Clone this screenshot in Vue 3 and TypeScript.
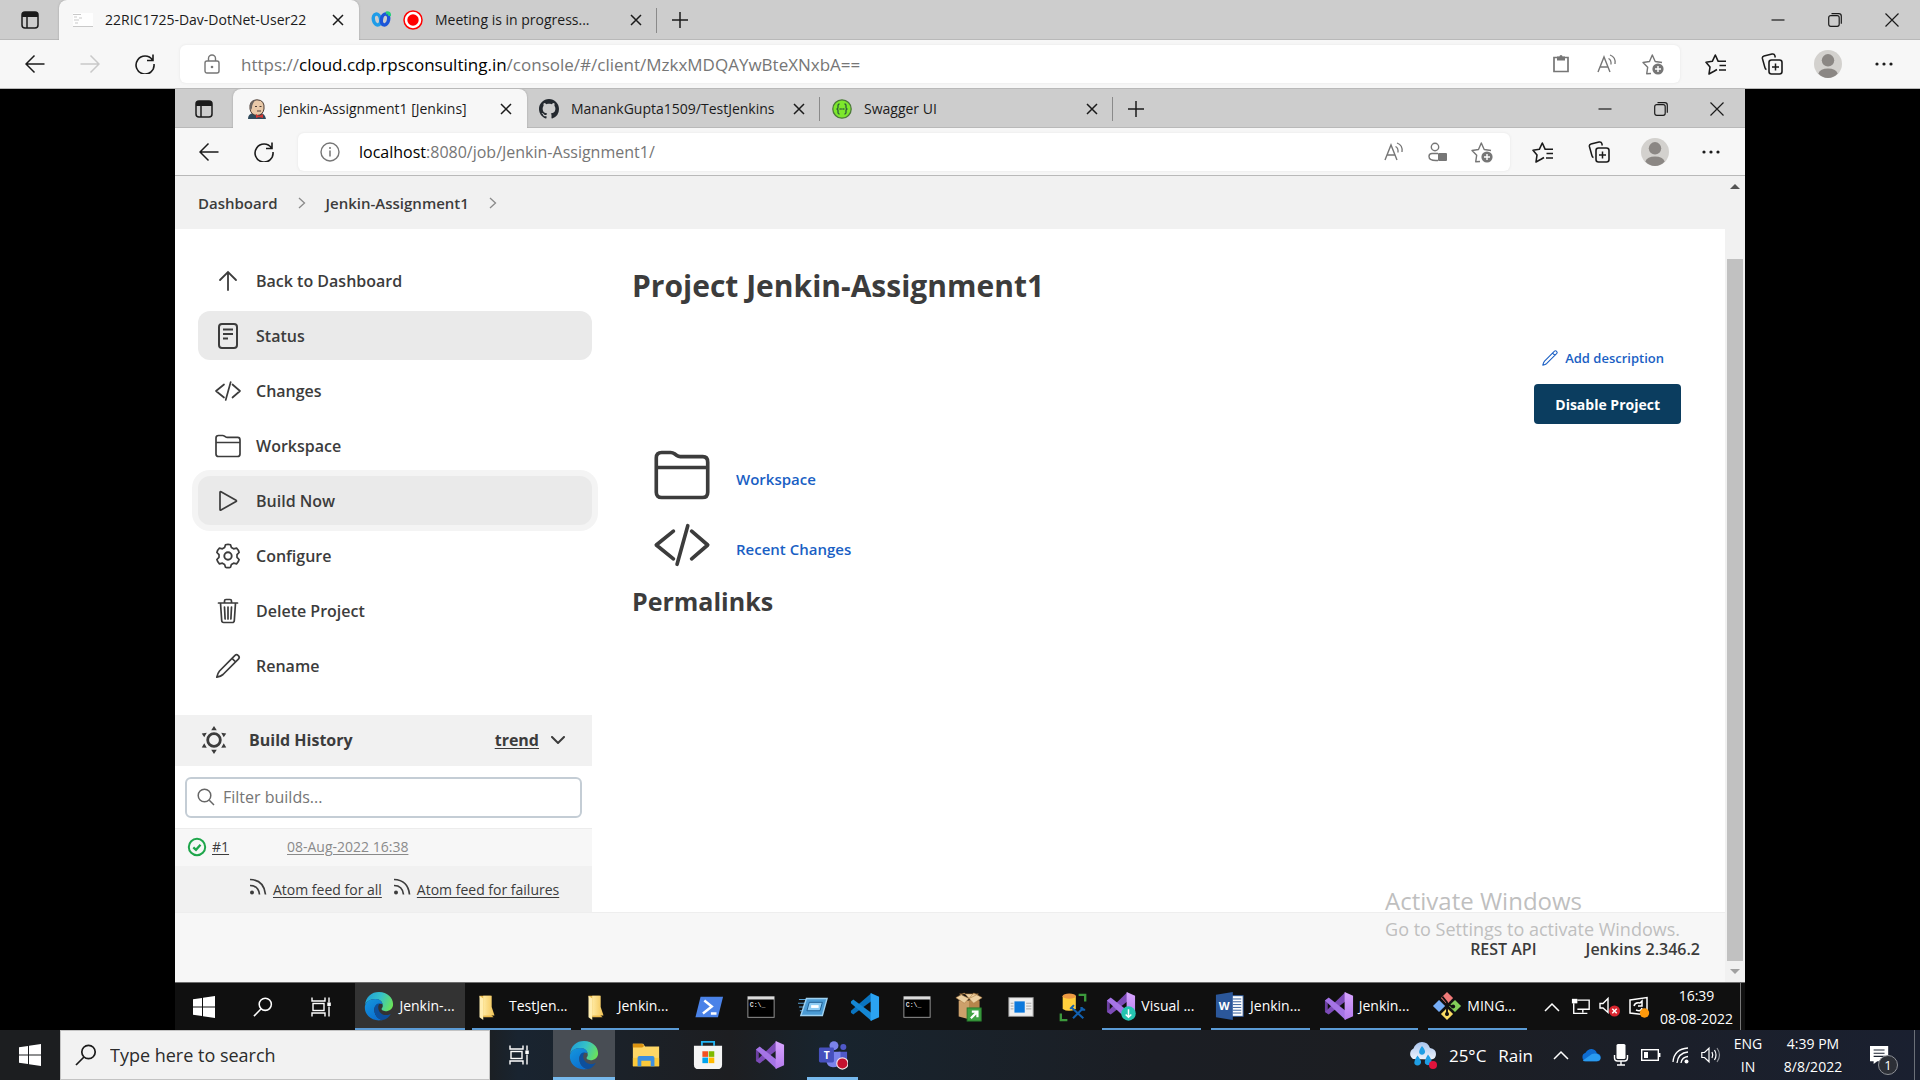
<script setup lang="ts">
import { ref } from 'vue'

interface Task {
  icon: string
  label: string
  active?: boolean
  focused?: boolean
}

interface Tab {
  title: string
  icon: string
  active?: boolean
  recording?: boolean
}

interface Glyph {
  text: string
  x: number
  y: number
  size: number
}

interface AppButton {
  icon: string
  label: string
  kind?: string
  glyph?: Glyph
}

const outerTabs: Tab[] = [
  { title: '22RIC1725-Dav-DotNet-User22', icon: 'i-console', active: true },
  { title: 'Meeting is in progress...', icon: 'i-webex', recording: true },
]

const innerTabs: Tab[] = [
  { title: 'Jenkin-Assignment1 [Jenkins]', icon: 'i-jenkins', active: true },
  { title: 'ManankGupta1509/TestJenkins', icon: 'i-github' },
  { title: 'Swagger UI', icon: 'i-swagger' },
]

const tasks: Task[] = [
  { icon: 'i-up', label: 'Back to Dashboard' },
  { icon: 'i-status', label: 'Status', active: true },
  { icon: 'i-code', label: 'Changes' },
  { icon: 'i-folder', label: 'Workspace' },
  { icon: 'i-play', label: 'Build Now', active: true, focused: true },
  { icon: 'i-gear', label: 'Configure' },
  { icon: 'i-trash', label: 'Delete Project' },
  { icon: 'i-pencil', label: 'Rename' },
]

const prompt: Glyph = { text: 'C:\\_', x: 4, y: 16, size: 7 }

const openLeft: AppButton[] = [
  { icon: 'i-edge', label: 'Jenkin-...', kind: 'current' },
  { icon: 'i-dir', label: 'TestJen...', kind: 'dir' },
  { icon: 'i-dir', label: 'Jenkin...', kind: 'dir' },
]
const pinned: AppButton[] = [
  { icon: 'i-ps', label: 'PowerShell' },
  { icon: 'i-cmd', label: 'Command Prompt', glyph: prompt },
  { icon: 'i-run', label: 'Run' },
  { icon: 'i-vscode', label: 'Visual Studio Code' },
  { icon: 'i-cmd', label: 'Developer Prompt', glyph: prompt },
  { icon: 'i-box', label: 'Packages' },
  { icon: 'i-panel', label: 'Server Manager' },
  { icon: 'i-sql', label: 'SQL Server Management' },
]
const openRight: AppButton[] = [
  { icon: 'i-vsinst', label: 'Visual ...' },
  { icon: 'i-word', label: 'Jenkin...', glyph: { text: 'W', x: 4, y: 20, size: 12 } },
  { icon: 'i-vs', label: 'Jenkin...' },
  { icon: 'i-git', label: 'MING...' },
]
const hostApps: AppButton[] = [
  { icon: 'i-edge', label: 'Microsoft Edge', kind: 'current' },
  { icon: 'i-explorer', label: 'File Explorer' },
  { icon: 'i-store', label: 'Microsoft Store' },
  { icon: 'i-vs', label: 'Visual Studio' },
  { icon: 'i-teams', label: 'Microsoft Teams', kind: 'running', glyph: { text: 'T', x: 6, y: 20, size: 11 } },
]

const filter = ref('')
const query = ref('')
</script>

<template>
  <div class="screen">
    <svg class="sprite" aria-hidden="true">
      <defs>
        <linearGradient id="edgeTop" x1="0" y1="0.3" x2="1" y2="0.6">
          <stop offset="0" stop-color="#1f9fd8" /><stop offset="0.5" stop-color="#35c1c8" /><stop offset="1" stop-color="#6be25a" />
        </linearGradient>
        <linearGradient id="edgeMid" x1="0" y1="0" x2="0.6" y2="1">
          <stop offset="0" stop-color="#1597dd" /><stop offset="1" stop-color="#0b6fd0" />
        </linearGradient>
        <linearGradient id="vsRight" x1="0" y1="0" x2="0" y2="1">
          <stop offset="0" stop-color="#d9a6ff" /><stop offset="1" stop-color="#b57bee" />
        </linearGradient>
        <linearGradient id="dirFill" x1="0" y1="0" x2="1" y2="0">
          <stop offset="0" stop-color="#ffe9a0" /><stop offset="1" stop-color="#f2c456" />
        </linearGradient>
        <linearGradient id="cloudFill" x1="0" y1="0" x2="0" y2="1">
          <stop offset="0" stop-color="#a9c5ee" /><stop offset="1" stop-color="#eef3fb" />
        </linearGradient>
      </defs>

      <symbol id="i-spaces" viewBox="0 0 18 18">
        <rect x="1" y="1" width="16" height="16" rx="3" fill="none" stroke="currentColor" stroke-width="1.5" />
        <path d="M1 6V4q0-3 3-3h10q3 0 3 3v2z" fill="currentColor" />
        <path d="M6 6v11" stroke="currentColor" stroke-width="1.5" />
      </symbol>
      <symbol id="i-close" viewBox="0 0 12 12">
        <path d="M1 1l10 10M11 1L1 11" stroke="currentColor" stroke-width="1.5" />
      </symbol>
      <symbol id="i-plus" viewBox="0 0 18 18">
        <path d="M9 1v16M1 9h16" stroke="currentColor" stroke-width="1.5" />
      </symbol>
      <symbol id="i-min" viewBox="0 0 14 14"><path d="M0.5 7h13" stroke="currentColor" stroke-width="1.2" /></symbol>
      <symbol id="i-restore" viewBox="0 0 14 14">
        <rect x="0.7" y="2.700" width="10.500" height="10.600" rx="2" fill="none" stroke="currentColor" stroke-width="1.2" />
        <path d="M3.500.7h7.300q2.500 0 2.500 2.500v7.600" fill="none" stroke="currentColor" stroke-width="1.200" />
      </symbol>
      <symbol id="i-x" viewBox="0 0 14 14"><path d="M.5.5l13 13M13.500.5l-13 13" stroke="currentColor" stroke-width="1.200" /></symbol>
      <symbol id="i-back" viewBox="0 0 20 20">
        <path d="M19.500 10H1M9.500 1.500L1 10l8.500 8.500" fill="none" stroke="currentColor" stroke-width="1.500" />
      </symbol>
      <symbol id="i-fwd" viewBox="0 0 20 20">
        <path d="M.5 10H19M10.500 1.500L19 10l-8.500 8.500" fill="none" stroke="currentColor" stroke-width="1.500" />
      </symbol>
      <symbol id="i-reload" viewBox="0 0 20 20">
        <path d="M17.500 6A9 9 0 1 0 19 10M18 .5v6h-6" fill="none" stroke="currentColor" stroke-width="1.600" />
      </symbol>
      <symbol id="i-lock" viewBox="0 0 16 20">
        <rect x="1" y="7" width="14" height="12" rx="2" fill="none" stroke="currentColor" stroke-width="1.400" />
        <path d="M4.500 7V4.500a3.500 3.500 0 0 1 7 0V7" fill="none" stroke="currentColor" stroke-width="1.400" />
        <circle cx="8" cy="13" r="1.300" fill="currentColor" />
      </symbol>
      <symbol id="i-info" viewBox="0 0 20 20">
        <circle cx="10" cy="10" r="9" fill="none" stroke="currentColor" stroke-width="1.400" />
        <path d="M10 8.500v6" stroke="currentColor" stroke-width="1.500" /><circle cx="10" cy="6" r="1" fill="currentColor" />
      </symbol>
      <symbol id="i-clip" viewBox="0 0 20 20">
        <path d="M3 3.500h14v14H3z" fill="none" stroke="currentColor" stroke-width="1.700" />
        <path d="M6 2.500h2.500a1.500 1.500 0 0 1 3 0H14v4H6z" fill="currentColor" />
      </symbol>
      <symbol id="i-aloud" viewBox="0 0 20 20">
        <path d="M1 18L7 3l6 15M3 13h8" fill="none" stroke="currentColor" stroke-width="1.400" />
        <path d="M11.500 4.500q3 1.500 2.500 6M13 1q6 2 5 9" fill="none" stroke="currentColor" stroke-width="1.300" />
      </symbol>
      <symbol id="i-id" viewBox="0 0 20 20">
        <circle cx="7" cy="5" r="3.700" fill="none" stroke="currentColor" stroke-width="1.400" />
        <path d="M10 11.500H4q-3 0-3 3 0 4 7 4h2" fill="none" stroke="currentColor" stroke-width="1.400" />
        <rect x="10" y="11" width="9" height="8" rx="1" fill="currentColor" />
      </symbol>
      <symbol id="i-staradd" viewBox="0 0 22 22">
        <path d="M9 20.500l-4.300 .3 1-6.600L1 9.500l6.500-1L10.300 2l2.900 6.500 6.800 1" fill="none" stroke="currentColor" stroke-width="1.400" stroke-linejoin="round" />
        <circle cx="16" cy="16" r="5.600" fill="currentColor" />
        <path d="M16 13v6M13 16h6" stroke="#fff" stroke-width="1.400" />
      </symbol>
      <symbol id="i-favs" viewBox="0 0 22 22">
        <path d="M12 16.500l-3 1.800-5 2.700 1-7L1 9.300l6.300-1L10.300 2l2.900 6.300H21M14.500 12.500H21M14 17h7" fill="none" stroke="currentColor" stroke-width="1.600" stroke-linejoin="round" />
      </symbol>
      <symbol id="i-coll" viewBox="0 0 22 22">
        <path d="M5.500 16.500q-1.200-.2-1.600-2L1.400 5.500Q1 3.500 3 3l8-2q2.300-.5 2.800 1.500l.5 2" fill="none" stroke="currentColor" stroke-width="1.500" />
        <rect x="8" y="7" width="13" height="14" rx="2.500" fill="none" stroke="currentColor" stroke-width="1.600" />
        <path d="M14.500 10.500v7M11 14h7" stroke="currentColor" stroke-width="1.500" />
      </symbol>
      <symbol id="i-user" viewBox="0 0 28 28">
        <circle cx="14" cy="14" r="14" fill="#d3d1ce" />
        <circle cx="14" cy="10.300" r="6.200" fill="#8b8784" />
        <path d="M4.300 23.500q2-5 9.700-5t9.700 5A14 14 0 0 1 14 28a14 14 0 0 1-9.700-4.500z" fill="#8b8784" />
      </symbol>
      <symbol id="i-dots" viewBox="0 0 18 4">
        <circle cx="2" cy="2" r="1.600" fill="currentColor" /><circle cx="9" cy="2" r="1.600" fill="currentColor" /><circle cx="16" cy="2" r="1.600" fill="currentColor" />
      </symbol>

      <symbol id="i-console" viewBox="0 0 20 20">
        <rect x="0" y="3" width="20" height="14" fill="#fefefe" /><path d="M0 16.500h20M0 4.500h8M1 7h3M6 8h3M1 10h5M2 13h3" stroke="#c9c9c9" />
      </symbol>
      <symbol id="i-webex" viewBox="0 0 20 20">
        <ellipse cx="6" cy="9.500" rx="3.600" ry="5.500" fill="none" stroke="#1f9ce8" stroke-width="3.500" transform="rotate(-12 6 9.500)" />
        <ellipse cx="14" cy="9.500" rx="3.600" ry="5.500" fill="none" stroke="#1c56d8" stroke-width="3.500" transform="rotate(12 14 9.500)" />
        <path d="M15 3q4-1 3.500 3" fill="none" stroke="#28d07c" stroke-width="3" />
      </symbol>
      <symbol id="i-rec" viewBox="0 0 20 20">
        <circle cx="10" cy="10" r="9" fill="#fff" stroke="#f00" stroke-width="1.500" /><circle cx="10" cy="10" r="5.700" fill="#f00" />
      </symbol>
      <symbol id="i-jenkins" viewBox="0 0 20 20">
        <path d="M1 20q0-5 5-6h8q4 1 5 6z" fill="#2f4a5c" />
        <path d="M3 10Q2 1 10 .8 18 1 17 10q-1 6-7 6.500Q4 16 3 10z" fill="#e9c9a8" stroke="#4a3b34" />
        <path d="M3 9Q2 1.500 9 .8 5 4 5 9l-1 2z" fill="#6a6460" />
        <path d="M8 7.500h2M12.500 7.500h2M10 12h4" stroke="#4a3b34" />
        <path d="M9 15l3 2 4-2v4l-4-1-3 1z" fill="#d33833" />
      </symbol>
      <symbol id="i-github" viewBox="0 0 16 16">
        <path fill="#24292f" d="M8 0C3.580 0 0 3.580 0 8c0 3.540 2.290 6.530 5.470 7.590.4.07.55-.17.55-.38 0-.19-.01-.82-.01-1.490-2.010.37-2.530-.49-2.690-.94-.09-.23-.48-.94-.82-1.130-.28-.15-.68-.52-.01-.53.63-.01 1.080.58 1.230.82.72 1.210 1.870.87 2.330.66.07-.52.28-.87.51-1.070-1.780-.2-3.640-.89-3.640-3.950 0-.87.31-1.590.82-2.150-.08-.2-.36-1.020.08-2.120 0 0 .67-.21 2.200.82.64-.18 1.320-.27 2-.27.68 0 1.360.09 2 .27 1.530-1.040 2.200-.82 2.200-.82.44 1.100.16 1.920.08 2.120.51.56.82 1.270.82 2.150 0 3.070-1.870 3.750-3.650 3.950.29.25.54.73.54 1.480 0 1.070-.01 1.930-.01 2.200 0 .21.15.46.55.38A8.010 8.010 0 0 0 16 8c0-4.420-3.580-8-8-8z" />
      </symbol>
      <symbol id="i-swagger" viewBox="0 0 20 20">
        <circle cx="10" cy="10" r="9.200" fill="#7de82c" stroke="#4c7a3a" stroke-width="1.300" />
        <path d="M7.500 5Q6 5 6 6.500V8.500Q6 10 4.500 10 6 10 6 11.500v2Q6 15 7.500 15M12.500 5Q14 5 14 6.500V8.500q0 1.500 1.500 1.500-1.500 0-1.500 1.500v2q0 1.500-1.500 1.500" fill="none" stroke="#2d5c3a" stroke-width="1.300" />
        <path d="M7.500 10h5" stroke="#2d5c3a" stroke-width="1.600" stroke-dasharray="1.300 .5" />
      </symbol>

      <symbol id="i-chev" viewBox="0 0 8 12"><path d="M1 1l5.500 5L1 11" fill="none" stroke="currentColor" stroke-width="1.300" /></symbol>
      <symbol id="i-up" viewBox="0 0 28 28">
        <path d="M14 23V5.500M6 13l8-8 8 8" fill="none" stroke="currentColor" stroke-width="1.800" stroke-linecap="round" />
      </symbol>
      <symbol id="i-status" viewBox="0 0 28 28">
        <rect x="5" y="2" width="18" height="24" rx="3" fill="none" stroke="currentColor" stroke-width="2" />
        <path d="M9 7.500h10M9 12h10M9 16.500h5" stroke="currentColor" stroke-width="1.900" />
      </symbol>
      <symbol id="i-code" viewBox="0 0 28 28">
        <path d="M10 7.500L2 14l8 6.500M18.500 7.500L26 14l-7.500 6.500M16.700 5l-5 18" fill="none" stroke="currentColor" stroke-width="1.700" stroke-linecap="round" stroke-linejoin="round" />
      </symbol>
      <symbol id="i-folder" viewBox="0 0 28 28">
        <path d="M2 22V6q0-2.500 2.500-2.500h4.200q1 0 1.800.6l1.100.8q.7.500 1.600.5h10.500Q26 5.400 26 8v14q0 2.500-2.500 2.500h-19Q2 24.500 2 22zM2 10.500h24" fill="none" stroke="currentColor" stroke-width="1.700" />
      </symbol>
      <symbol id="i-play" viewBox="0 0 28 28">
        <path d="M6 5.300q0-1 1-.5l15 8.400q1 .7 0 1.400L7 23q-1 .5-1-.5z" fill="none" stroke="currentColor" stroke-width="1.700" />
      </symbol>
      <symbol id="i-gear" viewBox="0 0 28 28">
        <path d="M11.500 2.800q2.500-1 5 0l.9 2.800 2.200 1.200 3-.6q1.900 1.800 2.500 4.300L23 12.700v2.600l2.100 2.200q-.6 2.500-2.500 4.300l-3-.6-2.200 1.200-.9 2.800q-2.500 1-5 0l-.9-2.800-2.200-1.200-3 .6q-1.900-1.800-2.500-4.300L5 15.300v-2.600l-2.100-2.200q.6-2.500 2.500-4.300l3 .6 2.200-1.200z" fill="none" stroke="currentColor" stroke-width="1.700" stroke-linejoin="round" />
        <circle cx="14" cy="14" r="3.700" fill="none" stroke="currentColor" stroke-width="1.900" />
      </symbol>
      <symbol id="i-trash" viewBox="0 0 28 28">
        <path d="M4.500 6h19M6.500 6l1.200 17.500q.1 2 2 2h8.600q1.900 0 2-2L21.500 6M10.500 6V4q0-1.500 1.500-1.500h4q1.500 0 1.500 1.500v2M10.500 10l.6 12M14 10v12M17.500 10l-.6 12" fill="none" stroke="currentColor" stroke-width="1.700" stroke-linecap="round" />
      </symbol>
      <symbol id="i-pencil" viewBox="0 0 28 28">
        <path d="M21 3.300q1.600-1.300 3.300.3t.3 3.300L9 22.500q-2 1.700-6.200 2.700 1-4.200 2.700-6.200zM18 6.300L21.700 10" fill="none" stroke="currentColor" stroke-width="1.700" stroke-linejoin="round" />
      </symbol>
      <symbol id="i-sun" viewBox="0 0 28 30">
        <circle cx="14" cy="15" r="6.800" fill="none" stroke="currentColor" stroke-width="3" />
        <path d="M14 0l3 4.500h-6zM14 30l3-4.500h-6zM.8 8l5.400-.8-2.700 4.800zM27.200 8l-5.400-.8 2.700 4.800zM.8 23l5.400 .4-2.700-5zM27.200 23l-5.400 .4 2.700-5z" fill="currentColor" />
      </symbol>
      <symbol id="i-down" viewBox="0 0 14 8"><path d="M1 1l6 6 6-6" fill="none" stroke="currentColor" stroke-width="2" stroke-linecap="round" /></symbol>
      <symbol id="i-find" viewBox="0 0 18 18">
        <circle cx="7.500" cy="7.500" r="6.300" fill="none" stroke="currentColor" stroke-width="1.500" /><path d="M12.300 12.300L17 17" stroke="currentColor" stroke-width="1.500" />
      </symbol>
      <symbol id="i-ok" viewBox="0 0 20 20">
        <circle cx="10" cy="10" r="8.200" fill="none" stroke="#1ea64b" stroke-width="2" /><path d="M6.300 10.300l2.700 2.500 4.500-5" fill="none" stroke="#1ea64b" stroke-width="2.300" />
      </symbol>
      <symbol id="i-rss" viewBox="0 0 18 18">
        <circle cx="3" cy="14.500" r="2" fill="currentColor" /><path d="M1 7.500q8.500 0 9.500 9M1 1.500q14 .5 15.500 15" fill="none" stroke="currentColor" stroke-width="1.700" />
      </symbol>

      <symbol id="i-win" viewBox="0 0 22 22">
        <path d="M0 3.200L9 2v8.500H0zM10 1.800L22 0v10.500H10zM0 11.500h9V20L0 18.800zM10 11.500h12V22l-12-1.800z" fill="#fff" />
      </symbol>
      <symbol id="i-loupe" viewBox="0 0 22 22">
        <circle cx="13.500" cy="8" r="6.700" fill="none" stroke="currentColor" stroke-width="1.700" /><path d="M9 13L1 21" stroke="currentColor" stroke-width="1.700" />
      </symbol>
      <symbol id="i-views" viewBox="0 0 22 20">
        <path d="M1 .5v3.500h13V.5M1 19.500V16h13v3.500M18 .5v5M18 9.500v10" fill="none" stroke="#fff" stroke-width="1.400" />
        <rect x="2" y="6.500" width="11" height="7" fill="none" stroke="#fff" stroke-width="1.400" /><rect x="16.300" y="5.500" width="3.500" height="3.500" fill="#fff" />
      </symbol>
      <symbol id="i-edge" viewBox="0 0 32 32">
        <path d="M1 15C2 6 8 1 16 1c9 0 15 6 15 13 0 5-4 7.500-8 7.500-3 0-5-1.500-4-3 1-1 1-2 1-3 0-4-3-7-8-7C6 8.500 2 12 1 15z" fill="url(#edgeTop)" />
        <path d="M1 16c1-4.500 5-7.500 11-7.500 4 0 7 2 8 5.500-6-2-9 2-9 6 0 6 4 10 9 11-1 .2-3 .4-4 .4C7 31 0 25 1 16z" fill="url(#edgeMid)" />
        <path d="M11 20c0-4 2-7 6-7-4 4-1 11.500 5 12.500 3 .5 5-.5 6.500-1-2 4-6 6.500-9 6.500C14 30 11 25 11 20z" fill="#0d4f9c" />
      </symbol>
      <symbol id="i-dir" viewBox="0 0 32 32">
        <path d="M8 5h12v20l3 3H12z" fill="#e9b94c" /><path d="M8 5l4 3v23l-4-3z" fill="#ffedb0" /><path d="M12 5h9v12l3 9H12z" fill="url(#dirFill)" />
      </symbol>
      <symbol id="i-ps" viewBox="0 0 32 32">
        <path d="M7 5h24l-5.500 22H1.500z" fill="#4a82e8" /><path d="M11 9l8 6.500-9.500 7.500M18 23h6" fill="none" stroke="#fff" stroke-width="2.600" />
      </symbol>
      <symbol id="i-cmd" viewBox="0 0 32 32">
        <rect x="2" y="5" width="28" height="22" fill="#000" stroke="#9a9a9a" /><path d="M2 6.500h28" stroke="#dcdcdc" stroke-width="3" />
      </symbol>
      <symbol id="i-run" viewBox="0 0 32 32">
        <path d="M1 8h8M0 12h8M1 16h6M2 20h5" stroke="#5da9dd" />
        <path d="M9 7h22l-5 18H3z" fill="#4b9bd4" stroke="#9fd2f2" stroke-width="1.500" /><path d="M12 11h14l-2.500 9H9.500z" fill="#8fcdf5" stroke="#1c5c90" /><path d="M14 15.500h8" stroke="#fff" stroke-width="3" />
      </symbol>
      <symbol id="i-vscode" viewBox="0 0 32 32">
        <path d="M23 1L1 20v2l2.500 2L23 9.500z" fill="#0a74c0" /><path d="M23 31L1 12v-2l2.500-2L23 22.500z" fill="#1587d4" /><path d="M22 1l9 4v22l-9 4z" fill="#2ba3f2" />
      </symbol>
      <symbol id="i-box" viewBox="0 0 32 32">
        <path d="M5 9h22v17l-11 3-11-3z" fill="#cda06b" /><path d="M16 9l11 0v17l-11 3z" fill="#b6854c" />
        <path d="M2 6l9-5 5 6-5 5zM30 6l-9-5-5 6 5 5zM6 2l10 5L26 2z" fill="#ecd0a2" stroke="#a8773f" stroke-width=".6" />
        <rect x="14" y="17" width="15" height="14" fill="#3fa142" stroke="#277a2c" /><path d="M18 28l6-6m-5-1h6v6" fill="none" stroke="#fff" stroke-width="2.400" />
      </symbol>
      <symbol id="i-panel" viewBox="0 0 32 32">
        <rect x="3" y="6" width="26" height="20" fill="#eee" stroke="#8a8a8a" /><rect x="9" y="10" width="11" height="12" fill="#0b78dc" />
        <path d="M5 12h3M5 15h3M5 18h3M21.500 12h5.500M21.500 15h5.500M21.500 18h5.500" stroke="#a2a2a2" />
      </symbol>
      <symbol id="i-sql" viewBox="0 0 32 32">
        <path d="M5 4v14q6.500 4 14 0V4z" fill="#ffcf3d" /><ellipse cx="12" cy="4.500" rx="7" ry="2.800" fill="#ee9a42" />
        <path d="M22 3h7v7M3 23v7h7" fill="none" stroke="#3c9a3c" stroke-width="2.500" />
        <path d="M15 17l12 11M27 17L16 28M13 18l4-4M25 16v3h4" fill="none" stroke="#1160b0" stroke-width="2.200" />
      </symbol>
      <symbol id="i-vs" viewBox="0 0 32 32">
        <path d="M1 10l3-2v16l-3-2z" fill="#6b3fa0" /><path d="M23 1v10L5 25l-4-2.500z" fill="#7d4cb8" />
        <path d="M1 10l4-3 18 14v10z" fill="#a574e6" /><path d="M22 1l9 4v22l-9 4z" fill="url(#vsRight)" />
      </symbol>
      <symbol id="i-vsinst" viewBox="0 0 32 32">
        <use href="#i-vs" /><circle cx="24" cy="24" r="7.700" fill="#25c4b0" /><path d="M24 19.500v8M21 25l3 3 3-3" fill="none" stroke="#fff" stroke-width="1.600" />
      </symbol>
      <symbol id="i-word" viewBox="0 0 32 32">
        <rect x="15" y="5" width="15" height="22" fill="#fff" stroke="#2b5797" /><path d="M19 8.500h9M19 11.500h9M19 14.500h9M19 17.500h9M19 20.500h9M19 23.500h9" stroke="#2b5797" />
        <path d="M1 4l18-3v30L1 28z" fill="#2b579a" />
      </symbol>
      <symbol id="i-git" viewBox="0 0 32 32">
        <path d="M16 1l6.500 6.500L16 14 9.500 7.500z" fill="#f07a78" /><path d="M24.500 9.500L31 16l-6.500 6.500L18 16z" fill="#83d058" />
        <path d="M16 18l6.500 6.500L16 31l-6.500-6.500z" fill="#fbdc62" /><path d="M7.500 9.500L14 16l-6.500 6.500L1 16z" fill="#76aef7" />
        <path d="M11 6l5 6v14M16 13l6 4" stroke="#101010" stroke-width="2" fill="none" /><circle cx="16" cy="24.500" r="2.200" fill="#101010" /><circle cx="22.500" cy="16.500" r="2.200" fill="#101010" />
      </symbol>
      <symbol id="i-explorer" viewBox="0 0 32 32">
        <path d="M2 4h11l2 3h15v21H2z" fill="#ffd766" /><path d="M2 4h10l2 2.500L12 8H2z" fill="#dc9310" /><path d="M2 19h28v9H2z" fill="#fbc93b" />
        <path d="M7 28v-9q0-2 2-2h14q2 0 2 2v9h-4v-6H11v6z" fill="#3d8fe0" />
      </symbol>
      <symbol id="i-store" viewBox="0 0 32 32">
        <path d="M9.500 6V2h13v4" fill="none" stroke="#22b4f2" stroke-width="2" /><path d="M1 6h30v20q0 5-5 5H6q-5 0-5-5z" fill="#f4f4f4" />
        <path d="M10 12h6v6h-6z" fill="#f25022" /><path d="M16.700 12h6v6h-6z" fill="#7fba00" /><path d="M10 18.700h6v6h-6z" fill="#00a4ef" /><path d="M16.700 18.700h6v6h-6z" fill="#ffb900" />
      </symbol>
      <symbol id="i-teams" viewBox="0 0 32 32">
        <circle cx="17" cy="6" r="4.800" fill="#7b83eb" /><circle cx="27" cy="7.500" r="3.200" fill="#5059c9" />
        <path d="M22 12.500h9V21q-1 5-6 5z" fill="#5059c9" /><path d="M9 12.500h15V22q-1 7-8 7-6 0-7-6z" fill="#7b83eb" />
        <rect x="1" y="8" width="16" height="16" rx="1.500" fill="#4650bd" />
        <circle cx="26" cy="25" r="6" fill="#c4122f" stroke="#f5e6e8" stroke-width="1.200" />
      </symbol>

      <symbol id="i-caret" viewBox="0 0 16 10"><path d="M1 9l7-7 7 7" fill="none" stroke="currentColor" stroke-width="1.500" /></symbol>
      <symbol id="i-net" viewBox="0 0 22 20">
        <path d="M7 2.500h13v10H7M3 6v11h7M13 12.500V16M9 17h9" fill="none" stroke="currentColor" stroke-width="1.500" /><path d="M1 1h6v5H1z" fill="currentColor" />
      </symbol>
      <symbol id="i-mute" viewBox="0 0 22 20">
        <path d="M1 6.500h3l5-5v14l-5-4.500H1z" fill="none" stroke="currentColor" stroke-width="1.400" /><circle cx="15.500" cy="14" r="5.500" fill="#d9252e" /><path d="M13.300 11.800l4.400 4.400M17.700 11.800l-4.400 4.400" stroke="#fff" stroke-width="1.500" />
      </symbol>
      <symbol id="i-update" viewBox="0 0 22 22">
        <path d="M2 4l17-2.500V19L2 17z" fill="none" stroke="currentColor" stroke-width="1.500" /><path d="M6 10q1-4 6-3l2-2v5h-4M14 12q-1 4-6 2" fill="none" stroke="currentColor" stroke-width="1.500" /><circle cx="16.500" cy="17" r="4.700" fill="#ff9a0c" />
      </symbol>
      <symbol id="i-rain" viewBox="0 0 30 28">
        <path d="M6 18a6 6 0 0 1 .5-10.500Q9 1 15 1t8 6q6 1 6 6t-5 5.500z" fill="url(#cloudFill)" />
        <path d="M15 5q4.500 5 2.500 7.500-2.500 2.500-5 0Q11 10 15 5zM10.500 14.500q5 6 3 8.500-3 3-6 0-1-3 3-8.500zM21 13.500q5 6 3 9-3 3.500-6 0-1-3 3-9z" fill="#1f9ee4" />
        <circle cx="26" cy="24" r="4" fill="#e0143c" />
      </symbol>
      <symbol id="i-cloud" viewBox="0 0 22 16">
        <path d="M5 15a5 5 0 0 1 0-9.500Q8 1 12 1.500q4 .5 5.500 4.500Q22 7 21.500 11 21 15 17.500 15z" fill="#0f6cd0" /><path d="M2 14l10-7q5-2 9 2 2 5-3.500 6H5q-2 0-3-1z" fill="#2a9bf0" />
      </symbol>
      <symbol id="i-mic" viewBox="0 0 16 22">
        <rect x="3.500" y="0" width="9" height="15" rx="1.500" fill="#fff" /><path d="M1.500 11v3q0 3 3 3h7q3 0 3-3v-3M8 17v4M4 21h8" fill="none" stroke="#fff" stroke-width="1.400" />
      </symbol>
      <symbol id="i-batt" viewBox="0 0 20 12">
        <rect x=".7" y=".7" width="16.600" height="10.600" fill="none" stroke="#fff" stroke-width="1.400" /><path d="M3 3h4v6H3z" fill="#fff" /><path d="M18.700 4v4" stroke="#fff" stroke-width="1.500" />
      </symbol>
      <symbol id="i-wifi" viewBox="0 0 18 18">
        <path d="M1 16Q2 3 16 2M5 17Q6 7 16 6M9 17q1-6 7-6.500" fill="none" stroke="#fff" stroke-width="1.300" /><circle cx="14.500" cy="15.500" r="2" fill="#fff" />
      </symbol>
      <symbol id="i-sound" viewBox="0 0 20 16">
        <path d="M.8 5.500h2.700L8 1.200v13.600L3.500 10.500H.8zM11 5q1.500 3 0 6M13.500 3q3 5 0 10" fill="none" stroke="#fff" stroke-width="1.200" /><path d="M16 1q5 7 0 14" fill="none" stroke="#8d9096" stroke-width="1.200" />
      </symbol>
      <symbol id="i-note" viewBox="0 0 22 20">
        <path d="M0 0h20v17H8l-4 3v-3H0z" fill="#fff" /><path d="M4 4.500h12M4 8h12M4 11.500h12" stroke="#1b2230" stroke-width="1.200" />
      </symbol>
    </svg>

    <header class="browser host">
      <div class="tabbar">
        <button class="spaces" aria-label="Tab actions"><svg class="s18"><use href="#i-spaces" /></svg></button>
        <div v-for="t in outerTabs" :key="t.title" class="tab" :class="{ active: t.active }">
          <svg class="s20"><use :href="'#' + t.icon" /></svg>
          <svg v-if="t.recording" class="s20"><use href="#i-rec" /></svg>
          <span class="title">{{ t.title }}</span>
          <button class="shut" aria-label="Close tab"><svg class="s12"><use href="#i-close" /></svg></button>
        </div>
        <button class="new" aria-label="New tab"><svg class="s18"><use href="#i-plus" /></svg></button>
        <div class="window">
          <button aria-label="Minimize"><svg class="s14"><use href="#i-min" /></svg></button>
          <button aria-label="Restore"><svg class="s14"><use href="#i-restore" /></svg></button>
          <button aria-label="Close"><svg class="s14"><use href="#i-x" /></svg></button>
        </div>
      </div>
      <div class="toolbar">
        <button class="nav" aria-label="Back"><svg class="s20"><use href="#i-back" /></svg></button>
        <button class="nav" aria-label="Forward" disabled><svg class="s20"><use href="#i-fwd" /></svg></button>
        <button class="nav" aria-label="Refresh"><svg class="s20"><use href="#i-reload" /></svg></button>
        <div class="address">
          <svg class="s20 site"><use href="#i-lock" /></svg>
          <span class="url">https://<b>cloud.cdp.rpsconsulting.in</b>/console/#/client/MzkxMDQAYwBteXNxbA==</span>
          <button aria-label="Clipboard"><svg class="s20"><use href="#i-clip" /></svg></button>
          <button aria-label="Read aloud"><svg class="s20"><use href="#i-aloud" /></svg></button>
          <button aria-label="Add to favorites"><svg class="s22"><use href="#i-staradd" /></svg></button>
        </div>
        <div class="tools">
          <button aria-label="Favorites"><svg class="s22"><use href="#i-favs" /></svg></button>
          <button aria-label="Collections"><svg class="s22"><use href="#i-coll" /></svg></button>
          <button aria-label="Profile"><svg class="s28"><use href="#i-user" /></svg></button>
          <button aria-label="More"><svg class="more"><use href="#i-dots" /></svg></button>
        </div>
      </div>
    </header>

    <div class="stage">
      <div class="remote">
        <header class="browser guest">
          <div class="tabbar">
            <button class="spaces" aria-label="Tab actions"><svg class="s18"><use href="#i-spaces" /></svg></button>
            <div v-for="t in innerTabs" :key="t.title" class="tab" :class="{ active: t.active }">
              <svg class="s20"><use :href="'#' + t.icon" /></svg>
              <span class="title">{{ t.title }}</span>
              <button class="shut" aria-label="Close tab"><svg class="s12"><use href="#i-close" /></svg></button>
            </div>
            <button class="new" aria-label="New tab"><svg class="s18"><use href="#i-plus" /></svg></button>
            <div class="window">
              <button aria-label="Minimize"><svg class="s14"><use href="#i-min" /></svg></button>
              <button aria-label="Restore"><svg class="s14"><use href="#i-restore" /></svg></button>
              <button aria-label="Close"><svg class="s14"><use href="#i-x" /></svg></button>
            </div>
          </div>
          <div class="toolbar">
            <button class="nav" aria-label="Back"><svg class="s20"><use href="#i-back" /></svg></button>
            <button class="nav" aria-label="Refresh"><svg class="s20"><use href="#i-reload" /></svg></button>
            <div class="address">
              <svg class="s20 site"><use href="#i-info" /></svg>
              <span class="url"><b>localhost</b>:8080/job/Jenkin-Assignment1/</span>
              <button aria-label="Read aloud"><svg class="s20"><use href="#i-aloud" /></svg></button>
              <button aria-label="Permissions"><svg class="s20"><use href="#i-id" /></svg></button>
              <button aria-label="Add to favorites"><svg class="s22"><use href="#i-staradd" /></svg></button>
            </div>
            <div class="tools">
              <button aria-label="Favorites"><svg class="s22"><use href="#i-favs" /></svg></button>
              <button aria-label="Collections"><svg class="s22"><use href="#i-coll" /></svg></button>
              <button aria-label="Profile"><svg class="s28"><use href="#i-user" /></svg></button>
              <button aria-label="More"><svg class="more"><use href="#i-dots" /></svg></button>
            </div>
          </div>
        </header>

        <div class="view">
          <div class="page">
            <nav class="crumbs" aria-label="Breadcrumb">
              <a href="#">Dashboard</a>
              <svg class="chev"><use href="#i-chev" /></svg>
              <a href="#">Jenkin-Assignment1</a>
              <svg class="chev"><use href="#i-chev" /></svg>
            </nav>

            <div class="columns">
              <aside>
                <nav class="tasks" aria-label="Project">
                  <a v-for="t in tasks" :key="t.label" href="#" :class="{ active: t.active, focused: t.focused }">
                    <svg class="s28"><use :href="'#' + t.icon" /></svg>{{ t.label }}
                  </a>
                </nav>
                <section class="history">
                  <div class="head">
                    <svg class="sun"><use href="#i-sun" /></svg>
                    <h2>Build History</h2>
                    <a href="#">trend</a>
                    <button aria-label="Collapse"><svg class="fold"><use href="#i-down" /></svg></button>
                  </div>
                  <label class="filter">
                    <svg class="s18"><use href="#i-find" /></svg>
                    <input v-model="filter" type="text" placeholder="Filter builds..." aria-label="Filter builds" />
                  </label>
                  <div class="build">
                    <svg class="s20"><use href="#i-ok" /></svg>
                    <a class="num" href="#">#1</a>
                    <a class="date" href="#">08-Aug-2022 16:38</a>
                  </div>
                  <div class="feeds">
                    <svg class="s18"><use href="#i-rss" /></svg><a href="#">Atom feed for all</a>
                    <svg class="s18"><use href="#i-rss" /></svg><a href="#">Atom feed for failures</a>
                  </div>
                </section>
              </aside>

              <main>
                <h1>Project Jenkin-Assignment1</h1>
                <div class="actions">
                  <a href="#"><svg class="s18"><use href="#i-pencil" /></svg>Add description</a>
                  <button>Disable Project</button>
                </div>
                <ul class="links">
                  <li><svg><use href="#i-folder" /></svg><a href="#">Workspace</a></li>
                  <li><svg><use href="#i-code" /></svg><a href="#">Recent Changes</a></li>
                </ul>
                <h2>Permalinks</h2>
              </main>
            </div>

            <footer>
              <a href="#">REST API</a>
              <a href="#">Jenkins 2.346.2</a>
            </footer>
          </div>
          <div class="scroll" aria-hidden="true">
            <i class="up"></i>
            <div class="thumb"></div>
            <i class="dn"></i>
          </div>
        </div>

        <div class="watermark">
          <p class="big">Activate Windows</p>
          <p>Go to Settings to activate Windows.</p>
        </div>

        <div class="taskbar guestbar">
          <button class="sys" aria-label="Start"><svg class="s22"><use href="#i-win" /></svg></button>
          <button class="sys" aria-label="Search"><svg class="s20"><use href="#i-loupe" /></svg></button>
          <button class="sys" aria-label="Task view"><svg class="s22"><use href="#i-views" /></svg></button>
          <button v-for="(a, i) in openLeft" :key="'l' + i" class="app" :class="a.kind">
            <svg class="s30"><use :href="'#' + a.icon" /></svg><span>{{ a.label }}</span>
          </button>
          <div class="pins">
            <button v-for="a in pinned" :key="a.label" :aria-label="a.label">
              <svg class="s30" viewBox="0 0 32 32">
                <use :href="'#' + a.icon" />
                <text v-if="a.glyph" class="mono" :x="a.glyph.x" :y="a.glyph.y" :font-size="a.glyph.size">{{ a.glyph.text }}</text>
              </svg>
            </button>
          </div>
          <button v-for="(a, i) in openRight" :key="'r' + i" class="app">
            <svg class="s30" viewBox="0 0 32 32">
              <use :href="'#' + a.icon" />
              <text v-if="a.glyph" class="letter" :x="a.glyph.x" :y="a.glyph.y" :font-size="a.glyph.size">{{ a.glyph.text }}</text>
            </svg>
            <span>{{ a.label }}</span>
          </button>
          <div class="tray">
            <button aria-label="Hidden icons"><svg class="caret"><use href="#i-caret" /></svg></button>
            <button aria-label="Network"><svg class="s20"><use href="#i-net" /></svg></button>
            <button aria-label="Volume"><svg class="s22"><use href="#i-mute" /></svg></button>
            <button aria-label="Updates"><svg class="s22"><use href="#i-update" /></svg></button>
            <div class="clock"><span>16:39</span><span>08-08-2022</span></div>
          </div>
        </div>
      </div>
    </div>

    <div class="taskbar hostbar">
      <button class="sys" aria-label="Start"><svg class="s22"><use href="#i-win" /></svg></button>
      <label class="search">
        <svg class="s22"><use href="#i-loupe" /></svg>
        <input v-model="query" type="text" placeholder="Type here to search" aria-label="Search" />
      </label>
      <button class="sys" aria-label="Task view"><svg class="s22"><use href="#i-views" /></svg></button>
      <div class="hostapps">
        <button v-for="a in hostApps" :key="a.label" :class="a.kind" :aria-label="a.label">
          <svg class="s30" viewBox="0 0 32 32">
            <use :href="'#' + a.icon" />
            <text v-if="a.glyph" class="letter" :x="a.glyph.x" :y="a.glyph.y" :font-size="a.glyph.size">{{ a.glyph.text }}</text>
          </svg>
        </button>
      </div>
      <div class="tray">
        <button class="weather"><svg class="s30"><use href="#i-rain" /></svg><span>25°C</span><span>Rain</span></button>
        <button aria-label="Hidden icons"><svg class="caret"><use href="#i-caret" /></svg></button>
        <button aria-label="OneDrive"><svg class="s20"><use href="#i-cloud" /></svg></button>
        <button aria-label="Microphone"><svg class="s22"><use href="#i-mic" /></svg></button>
        <button aria-label="Battery"><svg class="s20"><use href="#i-batt" /></svg></button>
        <button aria-label="Wi-Fi"><svg class="s18"><use href="#i-wifi" /></svg></button>
        <button aria-label="Speakers"><svg class="s20"><use href="#i-sound" /></svg></button>
        <div class="lang"><span>ENG</span><span>IN</span></div>
        <div class="clock"><span>4:39 PM</span><span>8/8/2022</span></div>
        <button class="notes" aria-label="Notifications"><svg class="s20"><use href="#i-note" /></svg><em>1</em></button>
      </div>
    </div>
  </div>
</template>

<style>
body {
  margin: 0;
  background: #000;
}
</style>

<style scoped>
.screen {
  display: flex;
  flex-direction: column;
  min-height: 100vh;
  background: #000;
  color: #1b1b1b;
  font-family: 'Open Sans', 'Noto Sans', sans-serif;
  font-size: 14px;
}
.screen * {
  box-sizing: border-box;
}
.sprite {
  position: absolute;
  width: 0;
  height: 0;
}
svg {
  flex: none;
  display: block;
}
.mono {
  fill: #ddd;
  font-family: 'Liberation Mono', monospace;
  font-weight: 700;
}
.letter {
  fill: #fff;
  font-weight: 700;
}
button {
  display: flex;
  align-items: center;
  justify-content: center;
  margin: 0;
  padding: 0;
  border: 0;
  background: none;
  color: inherit;
  font: inherit;
}
h1, h2, p, ul {
  margin: 0;
  padding: 0;
}
.s12 { width: 12px; height: 12px; }
.s14 { width: 14px; height: 14px; }
.s18 { width: 18px; height: 18px; }
.s20 { width: 20px; height: 20px; }
.s22 { width: 22px; height: 22px; }
.s28 { width: 28px; height: 28px; }
.s30 { width: 30px; height: 30px; }
.more { width: 18px; height: 4px; }
.caret { width: 16px; height: 10px; }

/* Browser chrome */
.tabbar {
  display: flex;
  height: 40px;
  background: #cdcdcd;
  box-shadow: inset 0 -1px #b9b9b9;
}
.guest .tabbar { height: 39px; }
.spaces { width: 59px; }
.guest .spaces { width: 58px; }
.tab {
  display: flex;
  align-items: center;
  gap: 12px;
  width: 298px;
  padding: 0 14px 0 12px;
  position: relative;
}
.guest .tab { width: 293px; }
.tab:not(.active)::after {
  content: '';
  position: absolute;
  right: 0;
  top: 8px;
  bottom: 7px;
  width: 1px;
  background: #8a8a8a;
}
.tab.active {
  width: 300px;
  padding-left: 14px;
  border-radius: 8px 8px 0 0;
  background: #f7f7f7;
  box-shadow: 0 0 2px #999;
  clip-path: inset(0 -2px 0 -2px);
}
.guest .tab.active { width: 294px; }
.title {
  flex: 1;
  padding-bottom: 1px;
  white-space: nowrap;
}
.shut { width: 14px; height: 20px; }
.new { width: 46px; }
.window {
  display: flex;
  margin-left: auto;
}
.window button { width: 57px; }
.guest .window button { width: 56px; }
.toolbar {
  display: flex;
  align-items: center;
  height: 49px;
  padding: 0 8px 0 7px;
  border-bottom: 1px solid #b9b9b9;
  background: #f7f7f7;
}
.guest .toolbar {
  height: 48px;
  padding: 0 6px;
}
.nav { width: 55px; }
.nav:disabled { color: #c9c9c9; }
.address {
  flex: 1;
  display: flex;
  align-items: center;
  height: 38px;
  margin: 0 8px;
  padding-right: 4px;
  border-radius: 6px;
  background: #fff;
  color: #767676;
  box-shadow: 0 0 3px #e4e4e4;
}
.guest .address {
  margin: 0 5px 0 7px;
  padding-right: 6px;
}
.site { margin: 0 19px 0 22px; }
.url {
  flex: 1;
  font-size: 17px;
  white-space: nowrap;
}
.guest .url { font-size: 16px; }
.url b {
  color: #000;
  font-weight: 400;
}
.address button { width: 46px; }
.guest .address button { width: 44px; }
.tools { display: flex; }
.tools button { width: 56px; }

/* Remote desktop */
.stage {
  flex: 1;
  display: flex;
  padding: 0 175px;
}
.remote {
  flex: 1;
  display: flex;
  flex-direction: column;
  min-width: 0;
  position: relative;
}
.view {
  flex: 1;
  display: flex;
  background: #fff;
}
.page {
  flex: 1;
  display: flex;
  flex-direction: column;
  color: #3c3c3c;
}
.page a {
  color: inherit;
  text-decoration: none;
}
.crumbs {
  display: flex;
  align-items: center;
  gap: 20px;
  height: 53px;
  padding: 0 23px;
  background: #f1f1f1;
  font-size: 15px;
  font-weight: 600;
}
.chev {
  width: 8px;
  height: 12px;
  color: #8a8a8a;
}
.columns { display: flex; }
aside { width: 417px; }
.tasks {
  display: flex;
  flex-direction: column;
  gap: 6px;
  padding: 27px 0 25px 23px;
}
.tasks a {
  display: flex;
  align-items: center;
  gap: 14px;
  height: 49px;
  padding: 1px 0 0 16px;
  border-radius: 12px;
  font-size: 16px;
  font-weight: 600;
}
.tasks .active { background: #eaeaea; }
.tasks .focused { box-shadow: 0 0 0 6px #f4f4f4; }
.head {
  display: flex;
  align-items: center;
  height: 51px;
  padding: 0 27px 2px 26px;
  background: #f1f1f1;
  font-size: 16px;
  font-weight: 700;
}
.sun { width: 26px; height: 28px; }
.head h2 {
  flex: 1;
  margin-left: 22px;
  font-size: 16px;
}
.head a, .build a, .feeds a { text-decoration: underline; text-underline-offset: 2px; }
.fold { width: 14px; height: 8px; }
.head button { margin-left: 12px; }
.filter {
  display: flex;
  align-items: center;
  gap: 8px;
  height: 41px;
  margin: 11px 10px 10px;
  padding: 0 10px 2px;
  border: 2px solid #c4cdd5;
  border-radius: 6px;
  color: #666;
}
.filter input, .search input {
  flex: 1;
  min-width: 0;
  padding: 0;
  border: 0;
  outline: 0;
  background: none;
  font: inherit;
  font-size: 16px;
}
.filter input::placeholder { color: #757575; }
.build {
  display: flex;
  align-items: center;
  height: 38px;
  padding: 0 0 2px 12px;
  border-top: 1px solid #ececec;
  background: #f7f7f7;
}
.build .num { width: 75px; margin-left: 5px; }
.build .date { color: #8a8a8a; }
.feeds {
  display: flex;
  align-items: center;
  height: 46px;
  padding-left: 74px;
  background: #f1f1f1;
}
.feeds svg {
  margin-right: 6px;
  align-self: flex-start;
  margin-top: 12px;
}
.feeds a { margin-right: 11px; }
main {
  flex: 1;
  padding: 35px 44px 0 40px;
}
h1 {
  font-size: 30px;
  line-height: 44px;
}
.actions {
  display: flex;
  flex-direction: column;
  align-items: flex-end;
  gap: 13px;
  margin-top: 37px;
}
.actions a {
  display: flex;
  align-items: center;
  gap: 6px;
  height: 26px;
  margin-right: 17px;
  color: #1a5fc4;
  font-size: 13px;
  font-weight: 600;
}
.actions button {
  height: 40px;
  padding: 0 21px;
  border-radius: 4px;
  background: #0b3d5f;
  color: #fff;
  font-weight: 700;
}
.links {
  margin: 16px 0 3px 20px;
  list-style: none;
}
.links li {
  display: flex;
  align-items: center;
  gap: 24px;
  height: 70px;
}
.links svg { width: 60px; height: 60px; }
.links a {
  padding-top: 7px;
  color: #1a5fc4;
  font-size: 15px;
  font-weight: 600;
}
main h2 {
  font-size: 25px;
  line-height: 36px;
}
footer {
  flex: 1;
  display: flex;
  justify-content: flex-end;
  gap: 49px;
  padding: 25px 25px 0;
  border-top: 1px solid #eee;
  background: #f7f7f7;
  font-size: 16px;
  font-weight: 600;
}
.scroll {
  display: flex;
  flex-direction: column;
  align-items: center;
  width: 20px;
  padding: 8px 0;
  background: #f1f1f1;
}
.scroll i {
  border: 5px solid transparent;
}
.scroll .up { border-bottom-color: #555; border-top: 0; }
.scroll .dn { border-top-color: #a0a0a0; border-bottom: 0; }
.thumb {
  flex: 1;
  width: 16px;
  margin: 70px 0 8px;
  background: #c1c1c1;
}
.watermark {
  position: absolute;
  right: 65px;
  bottom: 89px;
  color: #bfbfbf;
  font-size: 18px;
  line-height: 24px;
}
.watermark .big {
  font-size: 24px;
  line-height: 32px;
}

/* Taskbars */
.taskbar {
  display: flex;
  color: #fff;
}
.guestbar {
  height: 48px;
  border-top: 1px solid #6d6d6d;
  background: #101010;
}
.guestbar .sys { width: 59px; }
.app {
  justify-content: flex-start;
  gap: 5px;
  width: 99px;
  margin-right: 10px;
  padding-left: 4px;
  border-bottom: 2px solid #5b9bd5;
  font-size: 14px;
  white-space: nowrap;
}
.app.current {
  width: 110px;
  margin: 0 7px 0 4px;
  padding-left: 9px;
  background: #333;
}
.app.dir {
  gap: 7px;
  padding-left: 0;
}
.pins {
  display: flex;
  margin: 0 3px 0 -6px;
}
.pins button { width: 52px; }
.tray {
  display: flex;
  margin-left: auto;
}
.tray button { width: 30px; }
.clock, .lang {
  display: flex;
  flex-direction: column;
  align-items: center;
  justify-content: center;
  width: 86px;
  font-size: 14px;
  line-height: 23px;
}
.guestbar .tray button { width: 29px; }
.guestbar .tray { padding-right: 4px; }
.guestbar .clock {
  width: 88px;
  border-right: 1px solid #777;
}
.hostbar {
  height: 50px;
  background: linear-gradient(90deg, #1c1e20 0, #1c1e20 25%, #192430 27%, #1d1e21 38%, #18242e 43%, #1b1e24 60%, #1c1e22 72%, #1a2030 100%);
}
.hostbar .sys { width: 60px; }
.search {
  display: flex;
  align-items: center;
  gap: 13px;
  width: 430px;
  padding: 0 14px;
  border: 1px solid #c3c3c3;
  background: #f2f2f2;
  color: #1b1b1b;
}
.search input { font-size: 18px; }
.search input::placeholder { color: #2b2b2b; }
.hostapps {
  display: flex;
  margin-left: 3px;
}
.hostapps button {
  width: 62px;
  border-bottom: 3px solid transparent;
  padding-top: 2px;
}
.hostapps .current {
  border-color: #76b9ed;
  background: #484d54;
}
.hostapps .running {
  width: 51px;
  margin: 0 6px;
  border-color: #76b9ed;
}
.hostbar .weather {
  width: auto;
  gap: 12px;
  margin-right: 13px;
  font-size: 17px;
}
.hostbar .lang { width: 44px; }
.hostbar .tray {
  margin-right: 5px;
  padding-right: 10px;
  border-right: 1px solid #6b7078;
}
.hostbar .notes {
  width: 48px;
  position: relative;
}
.notes em {
  position: absolute;
  right: 6px;
  bottom: 5px;
  width: 20px;
  height: 20px;
  border: 1px solid #8d9096;
  border-radius: 50%;
  background: #2c2f36;
  font-size: 13px;
  font-style: normal;
  line-height: 18px;
}
</style>
